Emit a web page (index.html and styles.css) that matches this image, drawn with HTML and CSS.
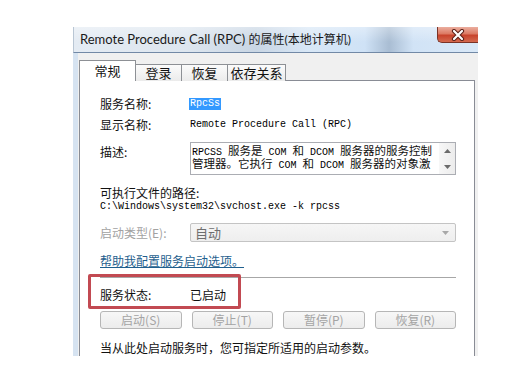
FILE: index.html
```html
<!DOCTYPE html>
<html lang="zh-CN">
<head>
<meta charset="utf-8">
<title>Remote Procedure Call (RPC) 的属性</title>
<link rel="stylesheet" href="styles.css">
</head>
<body>
<div class="window">
  <div class="titlebar">
    <span class="title">Remote Procedure Call (RPC) <span class="title-cjk">的属性(本地计算机)</span></span>
    <div class="close">
      <svg width="14" height="12" viewBox="0 0 14 12">
        <path d="M3 2 L11 10 M11 2 L3 10" stroke="#5a1f17" stroke-width="4.2" stroke-linecap="round" fill="none"/>
        <path d="M3 2 L11 10 M11 2 L3 10" stroke="#ffffff" stroke-width="2.2" stroke-linecap="round" fill="none"/>
      </svg>
    </div>
  </div>
  <div class="client">
    <div class="tabs">
      <div class="tab active t1">常规</div>
      <div class="tab t2">登录</div>
      <div class="tab t3">恢复</div>
      <div class="tab t4">依存关系</div>
    </div>
    <div class="panel">
      <div class="row r-first">
        <span class="label">服务名称:</span>
        <span class="mono sel">RpcSs</span>
      </div>
      <div class="row">
        <span class="label">显示名称:</span>
        <span class="mono">Remote Procedure Call (RPC)</span>
      </div>
      <div class="row desc">
        <span class="label">描述:</span>
        <div class="textbox">
          <div class="tb-text">
            <div class="tb-line"><span class="mono">RPCSS </span>服务是<span class="mono"> COM </span>和<span class="mono"> DCOM </span>服务器的服务控制</div>
            <div class="tb-line">管理器。它执行<span class="mono"> COM </span>和<span class="mono"> DCOM </span>服务器的对象激</div>
          </div>
          <div class="tb-scroll">
            <svg width="7" height="4" viewBox="0 0 7 4"><path d="M0 4 L3.5 0 L7 4 Z" fill="#6b6b6b"/></svg>
            <svg width="7" height="4" viewBox="0 0 7 4"><path d="M0 0 L3.5 4 L7 0 Z" fill="#6b6b6b"/></svg>
          </div>
        </div>
      </div>
      <div class="exe-label">可执行文件的路径:</div>
      <div class="exe-path mono">C:\Windows\system32\svchost.exe -k rpcss</div>
      <div class="row combo-row">
        <span class="label disabled">启动类型(E):</span>
        <div class="combo">
          <span>自动</span>
          <svg width="7" height="4" viewBox="0 0 7 4"><path d="M0 0 L3.5 4 L7 0 Z" fill="#a8a8a8"/></svg>
        </div>
      </div>
      <div class="link">帮助我配置服务启动选项。</div>
      <div class="separator"></div>
      <div class="row status-row">
        <span class="label">服务状态:</span>
        <span class="status">已启动</span>
      </div>
      <div class="buttons">
        <div class="btn">启动(S)</div>
        <div class="btn">停止(T)</div>
        <div class="btn">暂停(P)</div>
        <div class="btn">恢复(R)</div>
      </div>
      <div class="hint">当从此处启动服务时，您可指定所适用的启动参数。</div>
      <div class="annot"></div>
    </div>
  </div>
</div>
</body>
</html>
```

FILE: styles.css
```css
body {
  margin: 0;
  background: #ffffff;
  font-family: "Noto Sans CJK SC", sans-serif;
  color: #111111;
}

.window {
  margin: 27px 0 0 73px;
  width: 405px;
  height: 329px;
  overflow: hidden;
  display: flex;
  flex-direction: column;
  background: #f0f0f0;
}

.titlebar {
  height: 26px;
  flex-shrink: 0;
  box-sizing: border-box;
  border-bottom: 1px solid #7289a6;
  border-left: 1px solid #b9c6d4;
  background:
    linear-gradient(180deg, rgba(255,255,255,0.35) 0%, rgba(255,255,255,0) 60%),
    linear-gradient(90deg, #e4ebf3 0%, #dde6ef 28%, #c9d6e4 45%, #d8e7f6 58%, #cfe2f6 72%, #a9bdd3 78%, #d1e3f6 84%, #d9e8f7 100%);
  display: flex;
  justify-content: space-between;
  align-items: flex-start;
}

.title {
  font-family: Lato, "Noto Sans CJK SC", sans-serif;
  font-size: 13px;
  line-height: 25px;
  padding-left: 6px;
  color: #1a1a1a;
  white-space: nowrap;
}

.title-cjk {
  font-size: 12px;
}

.close {
  width: 41px;
  height: 16px;
  box-sizing: border-box;
  border: 1px solid #7b3326;
  border-top: none;
  border-right: none;
  border-radius: 0 0 0 5px;
  background: linear-gradient(180deg, #ebae9f 0%, #dc7a63 45%, #c8432c 55%, #d46a4f 100%);
  display: flex;
  align-items: center;
  justify-content: center;
}

.client {
  flex: 1;
  border-left: 5px solid #d6e3f1;
  padding: 7px 3px 0 1px;
  display: flex;
  flex-direction: column;
}

.tabs {
  display: flex;
  align-items: flex-end;
  height: 21px;
  margin-bottom: -1px;
  position: relative;
  z-index: 1;
}

.tab {
  height: 17px;
  box-sizing: border-box;
  border: 1px solid #8d9095;
  border-bottom: none;
  background: linear-gradient(180deg, #fbfbfb 0%, #ebebeb 100%);
  font-size: 13px;
  line-height: 16px;
  text-align: center;
  margin-left: -1px;
}

.tab.active {
  height: 21px;
  background: #ffffff;
  line-height: 19px;
  margin-left: 0;
  z-index: 2;
}

.t1 { width: 57px; }
.t2 { width: 47px; }
.t3 { width: 47px; }
.t4 { width: 59px; }

.panel {
  flex: 1;
  position: relative;
  background: #ffffff;
  border: 1px solid #898c95;
  padding: 12px 18px 0 20px;
}

.row {
  display: flex;
  align-items: center;
  height: 21px;
}

.label {
  width: 90px;
  flex-shrink: 0;
  font-size: 12px;
  white-space: nowrap;
}

.label.disabled {
  color: #a2a2a2;
}

.mono {
  font-family: "Liberation Mono", monospace;
  font-size: 10px;
  white-space: pre;
  color: #000000;
}

.sel {
  background: #3399ff;
  color: #ffffff;
  line-height: 12px;
  padding: 0 1px;
  margin-left: -1px;
}

.row.desc {
  height: auto;
  align-items: flex-start;
  margin-top: 7px;
}

.row.desc .label {
  line-height: 20px;
}

.textbox {
  width: 266px;
  height: 33px;
  box-sizing: border-box;
  border: 1px solid #abadb3;
  display: flex;
}

.tb-text {
  flex: 1;
  padding: 1px 1px 0;
  font-size: 11.5px;
  line-height: 13px;
}

.tb-line {
  white-space: nowrap;
  height: 13px;
}

.tb-line .mono {
  line-height: 13px;
}

.tb-scroll {
  width: 16px;
  display: flex;
  flex-direction: column;
  justify-content: space-between;
  align-items: center;
  padding: 6px 0 5px;
  box-sizing: border-box;
  background: linear-gradient(90deg, #f7f7f7, #ececec);
}

.exe-label {
  margin-top: 10px;
  font-size: 12px;
  line-height: 15px;
}

.exe-path {
  display: block;
  line-height: 14px;
}

.combo-row {
  margin-top: 9px;
  height: 19px;
}

.combo {
  width: 266px;
  height: 19px;
  box-sizing: border-box;
  border: 1px solid #c4c4c4;
  border-radius: 2px;
  background: linear-gradient(180deg, #f6f6f6, #eeeeee);
  display: flex;
  align-items: center;
  justify-content: space-between;
  padding: 0 6px 0 4px;
  font-size: 13px;
  color: #6e6e6e;
}

.link {
  margin-top: 11px;
  font-size: 12px;
  line-height: 16px;
  color: #1f5f8e;
  text-decoration: underline;
}

.separator {
  margin-top: 8px;
  width: 356px;
  height: 1px;
  background: #a7a7a7;
}

.status-row {
  margin-top: 7px;
  height: 18px;
}

.status {
  font-size: 12px;
}

.buttons {
  margin-top: 8px;
  width: 356px;
  display: grid;
  grid-template-columns: repeat(4, 1fr);
  column-gap: 10px;
}

.btn {
  height: 18px;
  box-sizing: border-box;
  border: 1px solid #b6b6b6;
  border-radius: 3px;
  background: linear-gradient(180deg, #f7f7f7 0%, #ececec 100%);
  color: #a4a4a4;
  font-size: 12px;
  line-height: 16px;
  text-align: center;
}

.hint {
  margin-top: 11px;
  font-size: 12px;
  line-height: 16px;
  white-space: nowrap;
}

.annot {
  position: absolute;
  left: 8px;
  top: 193px;
  width: 153px;
  height: 35px;
  box-sizing: border-box;
  border: 3px solid #c24a52;
  border-radius: 2px;
}
```
